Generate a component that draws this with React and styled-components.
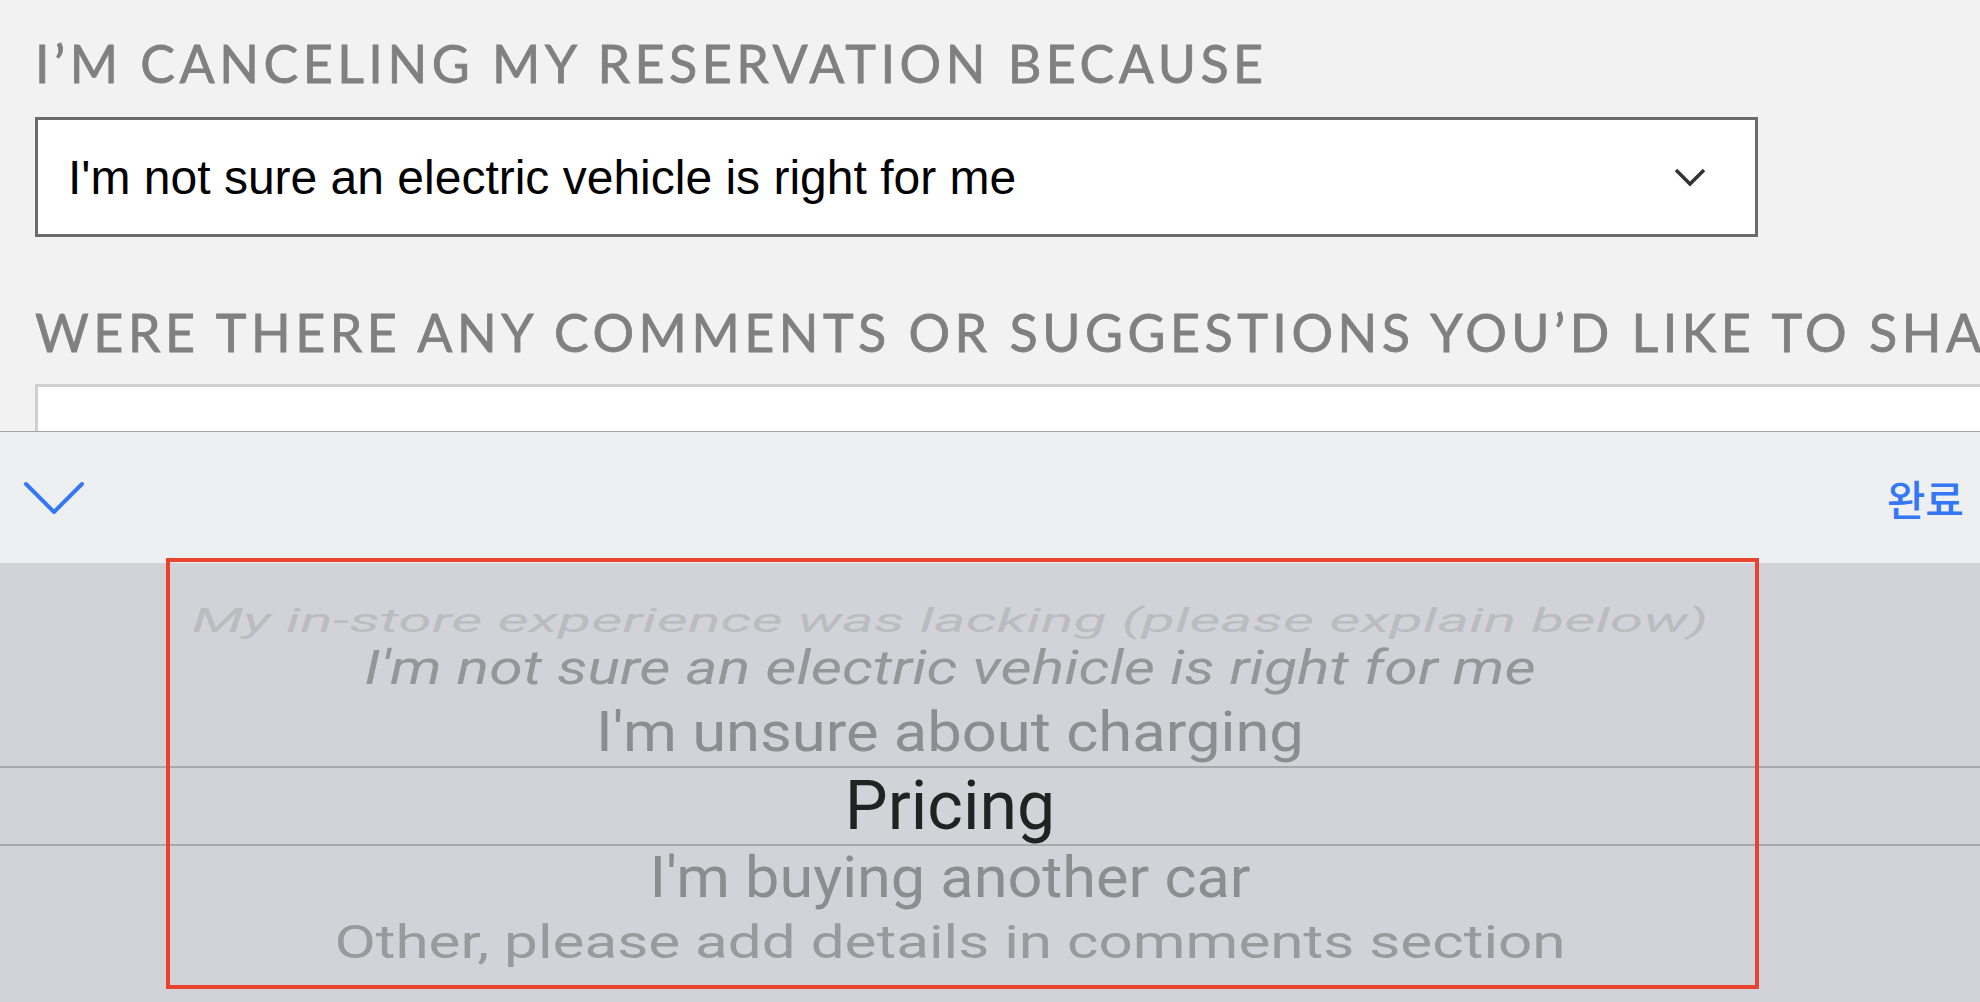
import React from "react";
import styled, { createGlobalStyle } from "styled-components";

const Global = createGlobalStyle`
  html, body { margin: 0; padding: 0; overflow: hidden; background: #f2f2f2; }
  #root { height: 100vh; }
  * { box-sizing: border-box; }
`;

const Screen = styled.div`
  position: relative;
  height: 100vh;
  display: flex;
  flex-direction: column;
  overflow: hidden;
`;

const Form = styled.section`
  height: 431px;
  flex: none;
  overflow: hidden;
  background: #f2f2f2;
  padding: 37px 0 0 35px;
  display: flex;
  flex-direction: column;
`;

const Heading = styled.h2`
  margin: 0 0 ${(p) => p.$gap}px 0;
  font-family: "Lato", "Open Sans", sans-serif;
  font-weight: 400;
  font-size: 52px;
  line-height: 52px;
  letter-spacing: 4.5px;
  color: #808080;
  -webkit-text-stroke: 0.8px #808080;
  white-space: nowrap;
  text-transform: uppercase;
`;

const Select = styled.div`
  width: 1723px;
  height: 120px;
  flex: none;
  background: #fff;
  border: 3px solid #6b6b6b;
  display: flex;
  align-items: center;
  justify-content: space-between;
  padding: 0 49px 0 30px;
  margin-bottom: 69px;
`;

const SelectValue = styled.span`
  font-family: "Liberation Sans", Arial, sans-serif;
  font-size: 48px;
  color: #000;
  white-space: nowrap;
`;

const TextArea = styled.div`
  width: 2100px;
  height: 120px;
  flex: none;
  background: #fff;
  border: 3px solid #cfcfcf;
`;

const Toolbar = styled.div`
  height: 132px;
  flex: none;
  background: #eeeff1;
  border-top: 1px solid #a3a4a7;
  display: flex;
  align-items: center;
  justify-content: space-between;
  padding: 0 16px 0 22px;
`;

const DoneButton = styled.span`
  font-family: "Noto Sans CJK KR", "Noto Sans", sans-serif;
  font-weight: 500;
  font-size: 42px;
  line-height: 1;
  color: #3478f6;
`;

const Picker = styled.div`
  flex: 1;
  background: #d1d3d8;
  padding-top: 43px;
  display: flex;
  flex-direction: column;
  overflow: hidden;
`;

const Row = styled.div`
  height: ${(p) => p.$h}px;
  flex: none;
  display: flex;
  align-items: center;
  justify-content: center;
  padding-right: 80px;
  border-top: ${(p) => (p.$selected ? "2px solid #a8a9ad" : "none")};
  border-bottom: ${(p) => (p.$selected ? "2px solid #a8a9ad" : "none")};
`;

const RowText = styled.span`
  display: inline-block;
  white-space: nowrap;
  font-family: "Roboto", "Inter", sans-serif;
  font-size: ${(p) => p.$size}px;
  line-height: 1;
  color: ${(p) => p.$color};
  font-style: ${(p) => (p.$italic ? "italic" : "normal")};
  transform: scaleY(${(p) => p.$scale});
`;

const Highlight = styled.div`
  position: absolute;
  left: 166px;
  top: 558px;
  width: 1593px;
  height: 431px;
  border: 4px solid #e8432e;
  pointer-events: none;
`;

const rows = [
  { text: "My in-store experience was lacking (please explain below)", h: 30, size: 60.8, color: "#bbbcc0", italic: true, scale: 0.54 },
  { text: "I'm not sure an electric vehicle is right for me", h: 64, size: 60.8, color: "#95969a", italic: true, scale: 0.79 },
  { text: "I'm unsure about charging", h: 66, size: 61.5, color: "#8c8d91", italic: false, scale: 0.89 },
  { text: "Pricing", h: 80, size: 68, color: "#222222", italic: false, scale: 1, selected: true },
  { text: "I'm buying another car", h: 64, size: 61.2, color: "#8c8d91", italic: false, scale: 0.93 },
  { text: "Other, please add details in comments section", h: 66, size: 60.2, color: "#999a9e", italic: false, scale: 0.77 },
];

const ChevronDown = ({ w, h, pts, color, sw, cap }) => (
  <svg width={w} height={h} viewBox={`0 0 ${w} ${h}`} fill="none">
    <polyline points={pts} stroke={color} strokeWidth={sw} strokeLinecap={cap} strokeLinejoin={cap === "round" ? "round" : "miter"} />
  </svg>
);

export default function App() {
  return (
    <Screen>
      <Global />
      <Form>
        <Heading $gap={28}>I’m canceling my reservation because</Heading>
        <Select>
          <SelectValue>I'm not sure an electric vehicle is right for me</SelectValue>
          <ChevronDown w={32} h={20} pts="2,3 16,17 30,3" color="#333" sw={3.5} cap="butt" />
        </Select>
        <Heading $gap={26}>Were there any comments or suggestions you’d like to share?</Heading>
        <TextArea />
      </Form>
      <Toolbar>
        <ChevronDown w={64} h={36} pts="4,4 32,32 60,4" color="#3478f6" sw={4} cap="round" />
        <DoneButton>완료</DoneButton>
      </Toolbar>
      <Picker>
        {rows.map((r) => (
          <Row key={r.text} $h={r.h} $selected={r.selected}>
            <RowText $size={r.size} $color={r.color} $italic={r.italic} $scale={r.scale}>
              {r.text}
            </RowText>
          </Row>
        ))}
      </Picker>
      <Highlight />
    </Screen>
  );
}
